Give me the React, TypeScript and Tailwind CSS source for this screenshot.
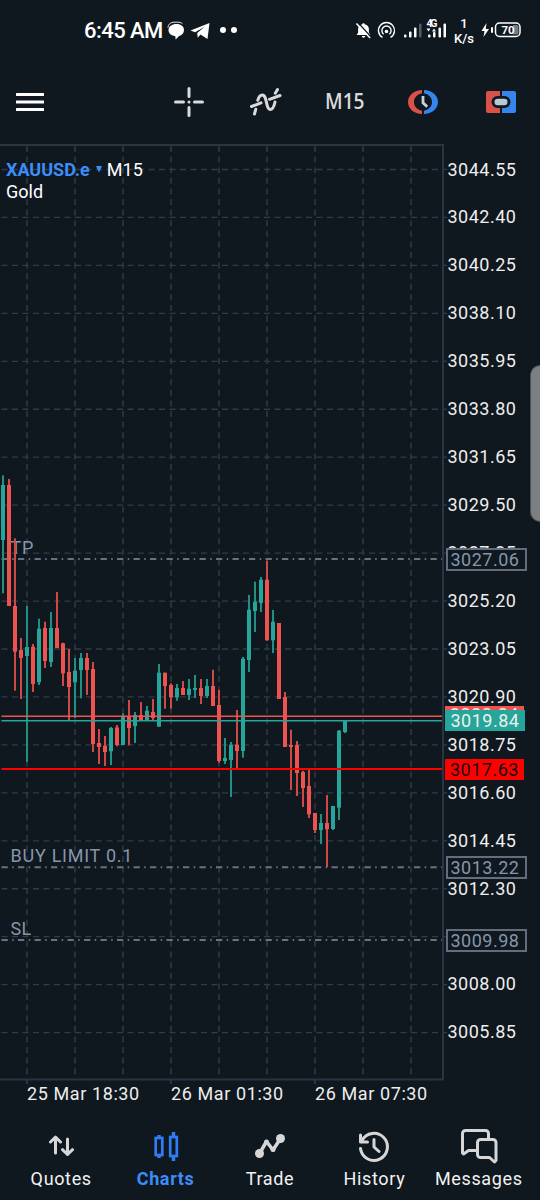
import type { ReactNode } from 'react';

type Candle = [high: number, low: number, top: number, bottom: number, up: 0 | 1];

const CHART_TOP = 144;

const candles: Candle[] = [
  [475.3, 593.3, 485, 540, 1], [479, 606, 485, 606, 0], [538.3, 690.7, 606, 651.7, 0], [638, 699, 650, 658, 0],
  [606, 762, 647, 656, 1], [644, 692, 646.7, 684, 0], [618.7, 685, 628.7, 682.3, 1], [621.7, 668, 628, 661, 0],
  [612, 667, 628, 662, 1], [592, 648, 628, 648, 0], [642.7, 686, 643.3, 673.3, 0], [649, 721, 672, 687, 0],
  [658, 718, 670.7, 682.3, 1], [653, 698.3, 658, 670, 1], [653, 695, 658, 670, 0], [662, 752, 669, 744, 0],
  [729, 764, 743, 747, 0], [736, 766, 745.7, 752, 0], [727, 765, 728, 751.3, 1], [725, 746.3, 727.5, 745, 0],
  [713.3, 745, 716, 745, 1], [700, 745.3, 716, 728, 0], [712, 743, 715, 726, 1], [702, 720.7, 715, 720.7, 0],
  [706, 721, 710.7, 720.7, 1], [699, 721, 712, 718, 0], [664, 726.7, 672.7, 726.7, 1], [672.7, 708.7, 672.7, 686, 0],
  [683.3, 708.7, 685, 697.3, 0], [684, 700.7, 688, 697.3, 1], [681, 695, 688, 695, 0], [679, 700, 688.7, 695, 1],
  [675, 698, 688, 690, 1], [679, 704, 688, 696, 0], [679, 698, 686, 696, 1], [669.7, 706, 686, 706, 0],
  [690, 762.7, 705, 761, 0], [738, 764, 758, 761, 1], [742, 797, 744.7, 760, 1], [710, 768, 744.7, 751, 0],
  [657, 757.7, 658.7, 751, 1], [595, 672, 609.7, 660, 1], [581.7, 632, 601.7, 611, 1], [577, 612, 579.7, 603, 1],
  [560.7, 640.7, 579.7, 640.3, 0], [610, 653, 621.7, 640.3, 1], [623, 699, 623, 699, 0], [692, 747, 697, 747, 0],
  [729.7, 790, 745, 747, 0], [741, 796, 745, 773, 0], [770.7, 807, 772, 788, 0], [770, 818, 786, 814.3, 0],
  [813, 833, 813, 830, 0], [814, 844, 823, 830, 1], [795, 867, 823, 829.3, 0], [806, 830, 806, 829, 1],
  [730, 820, 730.7, 807.7, 1], [720.7, 733, 720.7, 732, 1],
];

// The level at index 16 is left blank because the stop-loss tag takes its place.
const prices = [
  '3044.55', '3042.40', '3040.25', '3038.10', '3035.95', '3033.80', '3031.65', '3029.50', '3027.35', '3025.20',
  '3023.05', '3020.90', '3018.75', '3016.60', '3014.45', '3012.30', '', '3008.00', '3005.85',
];

const gridX = [27, 75, 123, 171, 219, 267, 315, 363, 411];
const orderLines = [559, 867.3, 940];

function StatusBar() {
  return (
    <header className="flex h-[60px] shrink-0 items-center pl-[84px] text-white">
      <span className="w-[83px] pt-[2px] text-[22px] font-medium leading-none tracking-[-0.55px]">6:45 AM</span>
      <svg className="mt-[2px]" width="18" height="20" viewBox="0 0 18 20" fill="white">
        <path d="M9.500 3c4.500 0 7.500 2.400 7.500 6.100 0 3.300-2.300 5.300-4.900 6L8.600 18.500l-.3-3.300C4 14.700 1.500 12.600 1.500 9.100 1.500 5.400 5 3 9.500 3z" />
        <path d="M.9 6.500C1.200 3.300 3.500 1.200 7 1.200h3.500c2.200 0 3.800.4 5 1.500" fill="none" stroke="white" strokeWidth=".9" />
      </svg>
      <svg className="ml-[5px] mt-[2px]" width="20" height="18" viewBox="0 0 20 18" fill="white">
        <path d="M.5 8.600 19.500.9 17.500 17l-7-4.500-2.800 3.200-.5-4.600 7.500-6.400-9.600 5.500z" />
      </svg>
      <span className="ml-[10px] size-[6px] rounded-full bg-white" />
      <span className="ml-[4.5px] size-[6px] rounded-full bg-white" />
      <div className="ml-auto flex items-center pr-[17px]">
        <svg width="17" height="17" viewBox="0 0 18 18" fill="white">
          <path d="M9 1.200c.8 0 1.300.5 1.300 1.300 2.800.6 4.400 2.600 4.400 5v4l1.600 2.200H1.700L3.300 11.500v-4c0-2.400 1.600-4.400 4.400-5 0-.8.5-1.300 1.300-1.300zM7.200 14.800h3.600a1.800 1.800 0 0 1-3.600 0z" />
          <path d="M3.200.8 17.200 16" stroke="#0f171f" strokeWidth="1.500" />
          <path d="M1.500 1.500 16 17" stroke="white" strokeWidth="1.600" />
        </svg>
        <svg className="ml-[5px]" width="19" height="19" viewBox="0 0 19 19" fill="none" stroke="white" strokeWidth="1.4">
          <path d="M5.500 16.400a8 8 0 1 1 8 0" />
          <path d="M6.600 13.200a4.600 4.600 0 1 1 5.800 0" />
          <circle cx="9.500" cy="10.500" r="1.800" fill="white" stroke="none" />
        </svg>
        <svg className="ml-[7px]" width="44" height="24" viewBox="0 0 44 24" fill="white">
          <rect x="1" y="16.500" width="2.500" height="3" rx="1" />
          <rect x="6" y="13.500" width="2.500" height="6" rx="1" />
          <rect x="11" y="9.500" width="2.500" height="10" rx="1" />
          <rect x="16" y="5.500" width="2.500" height="14" rx="1" opacity=".3" />
          <text x="23.500" y="9" fontSize="10.500" fontWeight="700" textLength="11">4G</text>
          <path d="M23.500 10.500h4l-2 3zM29 13.500h4l-2-3z" />
          <rect x="25" y="16.500" width="2.500" height="3" rx="1" />
          <rect x="30" y="14" width="2.500" height="5.500" rx="1" />
          <rect x="35.500" y="9.500" width="2.500" height="10" rx="1" />
          <rect x="40.500" y="5.500" width="2.500" height="14" rx="1" />
        </svg>
        <div className="ml-[6px] w-[22px] pt-[3px] text-center text-[13px] font-medium leading-[14.5px]">
          <div>1</div>
          <div className="whitespace-nowrap">K/s</div>
        </div>
        <svg className="ml-[6px]" width="42" height="18" viewBox="0 0 42 18">
          <path d="M5.500 2 .500 10h3l-1 6 5.500-8H4.800z" fill="white" />
          <rect x="10" y="6" width="2" height="6" rx="1" fill="white" />
          <rect x="14.500" y="2" width="24.500" height="13.500" rx="4" fill="#0f171f" stroke="white" strokeWidth="1.500" />
          <path d="M32 4h4a1.500 1.500 0 0 1 1.500 1.500v6.500a1.500 1.500 0 0 1-1.500 1.500h-4z" fill="#777c82" />
          <text x="27" y="12.800" fill="white" fontSize="11.500" fontWeight="700" textAnchor="middle">70</text>
        </svg>
      </div>
    </header>
  );
}

function Toolbar() {
  return (
    <div className="flex h-[84px] shrink-0 items-center pl-[16px]">
      <svg width="28" height="20" viewBox="0 0 28 20" fill="white">
        <rect y="1" width="28" height="3" rx=".5" />
        <rect y="8.500" width="28" height="3" rx=".5" />
        <rect y="16" width="28" height="3" rx=".5" />
      </svg>
      <svg className="ml-[130px]" width="30" height="30" viewBox="0 0 30 30" stroke="#dadada" strokeWidth="3" strokeLinecap="round">
        <path d="M15 1.500v8M15 20.500v8M1.500 15h8M20.500 15h8M15 15h.01" />
      </svg>
      <svg className="ml-[45px]" width="34" height="30" viewBox="0 0 34 30" fill="none" stroke="#dadada" strokeWidth="3" strokeLinecap="round">
        <path d="M2.500 19.500 12 15.800M20.500 12.300 31 8.500M5.500 27l1.300-4.800M8.800 13.200c1-3.200 2.200-5.200 4.400-5.200 5.300 0 3.300 14.500 8 14.500 2.600 0 3.700-2.500 4.800-7.500M26.300 6.200 28.500 2.500" />
      </svg>
      <div className="ml-[42px] w-[41px]">
        <span className="inline-block origin-left scale-x-[.87] font-['Open_Sans',sans-serif] text-[22px] font-semibold leading-none text-[#d9d9d9]">M15</span>
      </div>
      <svg className="ml-[41px]" width="32" height="26" viewBox="0 0 32 26">
        <path d="M15 1C7.500 1 1 6 1 13s6.500 12 14 12v-3.200C10.500 20.800 7 17.800 7 13s3.500-7.800 8-8.800z" fill="#d9524a" />
        <path d="M17 1c7.500 0 14 5 14 12s-6.500 12-14 12v-3.200c4.500-1 8-4 8-8.800s-3.500-7.800-8-8.800z" fill="#3585ed" />
        <path d="M16 7v6.800l4.200 4" fill="none" stroke="#c9d2d9" strokeWidth="2.800" />
      </svg>
      <svg className="ml-[46px]" width="32" height="24" viewBox="0 0 32 24">
        <path d="M3 1h12v5h-2.500a6 6 0 0 0 0 12H15v5H3a2 2 0 0 1-2-2V3a2 2 0 0 1 2-2z" fill="#d9524a" />
        <path d="M17 1h12a2 2 0 0 1 2 2v18a2 2 0 0 1-2 2H17v-5h2.500a6 6 0 0 0 0-12H17z" fill="#3585ed" />
        <rect x="9.500" y="8.700" width="13" height="6.600" rx="3.200" fill="#b9c8d4" />
      </svg>
    </div>
  );
}

function Plot() {
  return (
    <svg className="block shrink-0" width="447" height="943" viewBox={`0 ${CHART_TOP} 447 943`}>
      <g stroke="#29303c" strokeWidth="2">
        {gridX.map((x) => (
          <path key={x} d={`M${x} 146V1078`} strokeDasharray="6 4.6" />
        ))}
      </g>
      <g stroke="#323c49" strokeWidth="1.3">
        {prices.map((_, i) => (
          <path key={i} d={`M1.500 ${169.5 + i * 47.95}H441`} strokeDasharray="6 4.5" />
        ))}
        {prices.map((_, i) => (
          <path key={i} d={`M443 ${169.5 + i * 47.95}h4`} />
        ))}
      </g>
      <path d="M0 145H443V1079.500H0M27 1080v4M171 1080v4M315 1080v4" fill="none" stroke="#2b3541" strokeWidth="2" />
      <g fill="#8796aa" fontSize="18" letterSpacing=".75">
        <text x="10.500" y="553.500">TP</text>
        <text x="10.500" y="862">BUY LIMIT 0.1</text>
        <text x="10.500" y="935" letterSpacing=".3">SL</text>
      </g>
      <g stroke="#6b7180" strokeWidth="2">
        {orderLines.map((y) => (
          <path key={y} d={`M1.500 ${y}H442`} strokeDasharray="6.300 4.400 1.500 4.300" />
        ))}
      </g>
      {candles.map(([high, low, top, bottom, up], i) => (
        <g key={i}>
          <rect x={2 + i * 6} y={high} width="2" height={low - high} fill={up ? '#228f83' : '#cf4946'} />
          <rect x={1 + i * 6} y={top} width="4" height={bottom - top} fill={up ? '#26a69a' : '#ef5350'} />
        </g>
      ))}
      <path d="M1.500 716.300H442" stroke="#ef5350" strokeWidth="1.500" />
      <path d="M1.500 720.700H442" stroke="#26a69a" strokeWidth="1.500" />
      <path d="M1.500 769H442" stroke="#ff0000" strokeWidth="2" />
    </svg>
  );
}

function PriceScale() {
  return (
    <div className="relative -ml-[1px] flex-1 pt-[1.500px] text-[18px] leading-[47.95px] tracking-[.5px]">
      {prices.map((p, i) => (
        <div key={i} className="h-[47.95px] pl-[1.500px]">{p}</div>
      ))}
      <div className="absolute left-0 top-[404px] flex h-[23px] w-[81px] items-center border-2 border-[#656c7d] bg-[#0f171f] pl-[2.500px] leading-none text-[#8796aa]">3027.06</div>
      <div className="absolute left-[-1px] top-[562px] h-[22px] w-[79px] bg-[#ef5350] pl-[5px] leading-none">3020.04</div>
      <div className="absolute left-[-1px] top-[566px] flex h-[21px] w-[80px] items-center bg-[#26a69a] pl-[5.5px] leading-none">3019.84</div>
      <div className="absolute left-[-1px] top-[615px] flex h-[21px] w-[79px] items-center bg-[#ff0000] pl-[5px] leading-none text-[#101010]">3017.63</div>
      <div className="absolute left-0 top-[712px] flex h-[23px] w-[81px] items-center border-2 border-[#656c7d] bg-[#0f171f] pl-[2.500px] leading-none text-[#8796aa]">3013.22</div>
      <div className="absolute left-0 top-[785px] flex h-[23px] w-[81px] items-center border-2 border-[#656c7d] bg-[#0f171f] pl-[2.500px] leading-none text-[#8796aa]">3009.98</div>
      <div className="absolute right-0 top-[221px] h-[157px] w-[10px] rounded-l-[10px] border border-r-0 border-[#4b5157] bg-[#7d8083]" />
    </div>
  );
}

function NavItem({ label, active, children }: { label: string; active?: boolean; children: ReactNode }) {
  return (
    <div className={`flex flex-col items-center ${active ? 'text-[#3d8df8]' : 'text-[#d6d6d6]'}`}>
      <div className="flex h-[40px] items-center">{children}</div>
      <span className={`mt-[3px] text-[18px] leading-[20px] tracking-[.65px] ${active ? 'font-bold' : 'text-[#f2f2f2]'}`}>{label}</span>
    </div>
  );
}

export default function App() {
  return (
    <main className="relative flex h-[1200px] w-[540px] flex-col overflow-hidden bg-[#0f171f] font-[Roboto,sans-serif] text-[#eeeeee]">
      <StatusBar />
      <Toolbar />
      <section className="relative flex h-[939px] shrink-0">
        <Plot />
        <PriceScale />
        <div className="absolute left-[6px] top-[14.5px] text-[18px] leading-[22px]">
          <div className="flex items-center">
            <span className="font-bold text-[#3d8df8]">XAUUSD.e</span>
            <svg className="ml-[6px]" width="6" height="7" viewBox="0 0 6 7" fill="#3d8df8"><path d="M0 0h6L3 6.500z" /></svg>
            <span className="ml-[5px] text-white">M15</span>
          </div>
          <div className="text-white">Gold</div>
        </div>
      </section>
      <div className="flex h-[22px] shrink-0 pl-[27px] text-[18px] leading-[22px] tracking-[.6px]">
        <span className="w-[144px] whitespace-nowrap">25 Mar 18:30</span>
        <span className="w-[144px] whitespace-nowrap">26 Mar 01:30</span>
        <span className="whitespace-nowrap">26 Mar 07:30</span>
      </div>
      <nav className="mt-[21px] grid shrink-0 grid-cols-5 px-[9px]">
        <NavItem label="Quotes">
          <svg width="26" height="22" viewBox="0 0 26 22" fill="none" stroke="currentColor" strokeWidth="3" strokeLinecap="round" strokeLinejoin="round">
            <path d="M7.500 18V2.500M2.500 7l5-4.800 5 4.800M19.500 4v15.500M14.500 14.700l5 4.800 5-4.800" />
          </svg>
        </NavItem>
        <NavItem label="Charts" active>
          <svg width="26" height="30" viewBox="0 0 26 30" fill="none" stroke="#2f7df6" strokeWidth="2.700">
            <path d="M6 4v3M6 24v3M20.500 1v5M20.500 25v5" strokeWidth="3.500" />
            <rect x="2.700" y="7" width="6.600" height="17" />
            <rect x="17.200" y="6" width="6.600" height="19" />
          </svg>
        </NavItem>
        <NavItem label="Trade">
          <svg width="32" height="28" viewBox="0 0 32 28" fill="none" stroke="currentColor" strokeWidth="3.500" strokeLinecap="round" strokeLinejoin="round">
            <path d="m5.500 21.500 7-12 6.500 8.500L26.500 6.500" />
            <circle cx="5.500" cy="21.500" r="4.500" fill="currentColor" stroke="none" />
            <circle cx="26.500" cy="6.500" r="4.500" fill="currentColor" stroke="none" />
            <circle cx="12.500" cy="10" r="2.500" fill="currentColor" stroke="none" />
            <circle cx="19" cy="17.500" r="2.500" fill="currentColor" stroke="none" />
          </svg>
        </NavItem>
        <NavItem label="History">
          <svg width="32" height="32" viewBox="0 0 32 32" fill="none" stroke="currentColor" strokeWidth="3" strokeLinecap="round" strokeLinejoin="round">
            <path d="M2.500 18.500A13.500 13.500 0 1 0 4 10.500M2.500 5v7h7M16 9.500v7.500l5 4.500" />
          </svg>
        </NavItem>
        <NavItem label="Messages">
          <svg className="-mt-[1px]" width="38" height="36" viewBox="0 0 38 36" fill="none" stroke="currentColor" strokeWidth="3" strokeLinecap="round" strokeLinejoin="round">
            <path d="M15.500 22.500H8.500L3.500 26 2.500 25V5.500a3 3 0 0 1 3-3h20a3 3 0 0 1 3 3V10" />
            <path d="M20.500 11.500h12.500a3 3 0 0 1 3 3v18l-1.500 1.500-5-4.500h-9a3 3 0 0 1-3-3v-12a3 3 0 0 1 3-3z" />
          </svg>
        </NavItem>
      </nav>
    </main>
  );
}
